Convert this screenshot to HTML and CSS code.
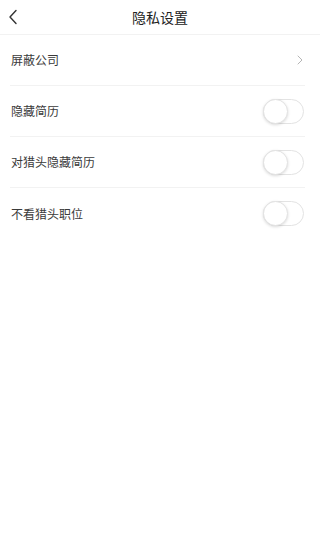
FILE: index.html
```html
<!DOCTYPE html>
<html lang="zh">
<head>
<meta charset="utf-8">
<link rel="stylesheet" href="styles.css">
</head>
<body>
<header class="nav">
  <span class="back">
    <svg width="10" height="16" viewBox="0 0 10 16"><path d="M8 1.5 L2 8 L8 14.5" fill="none" stroke="#333" stroke-width="1.4" stroke-linecap="round" stroke-linejoin="round"/></svg>
  </span>
  <h1 class="title">隐私设置</h1>
</header>
<ul class="list">
  <li class="row">
    <span class="label">屏蔽公司</span>
    <svg class="arrow" width="6" height="10" viewBox="0 0 6 10"><path d="M1 1 L5 5 L1 9" fill="none" stroke="#b5b5b5" stroke-width="1" stroke-linecap="round" stroke-linejoin="round"/></svg>
  </li>
  <li class="row">
    <span class="label">隐藏简历</span>
    <span class="switch"><span class="knob"></span></span>
  </li>
  <li class="row">
    <span class="label">对猎头隐藏简历</span>
    <span class="switch"><span class="knob"></span></span>
  </li>
  <li class="row last">
    <span class="label">不看猎头职位</span>
    <span class="switch"><span class="knob"></span></span>
  </li>
</ul>
</body>
</html>
```
FILE: styles.css
```css
* { box-sizing: border-box; }
html, body {
  margin: 0;
  padding: 0;
  background: #fff;
  font-family: "Noto Sans CJK SC", "Noto Sans", sans-serif;
}
.nav {
  height: 35px;
  border-bottom: 1px solid #f2f2f2;
  display: flex;
  align-items: center;
  justify-content: center;
  position: relative;
}
.back {
  position: absolute;
  left: 8px;
  top: 9px;
  display: flex;
}
.title {
  margin: 0;
  font-size: 14px;
  font-weight: normal;
  color: #222;
  line-height: 1;
}
.list {
  list-style: none;
  margin: 0 15px 0 10px;
  padding: 0;
}
.row {
  height: 51px;
  border-bottom: 1px solid #f2f2f2;
  display: flex;
  align-items: center;
  justify-content: space-between;
  padding-left: 1px;
}
.row.last { border-bottom: none; }
.label {
  font-size: 12px;
  color: #3a3a3a;
  line-height: 1;
}
.arrow { margin-right: 2px; }
.switch {
  width: 41px;
  height: 25px;
  border-radius: 13px;
  border: 1px solid #e3e3e3;
  background: #fff;
  position: relative;
  margin-right: 1px;
}
.knob {
  position: absolute;
  left: -1px;
  top: -1px;
  width: 25px;
  height: 25px;
  border-radius: 50%;
  background: #fff;
  border: 1px solid #e3e3e3;
  box-shadow: 0 1px 3px rgba(0,0,0,0.15);
}
```
